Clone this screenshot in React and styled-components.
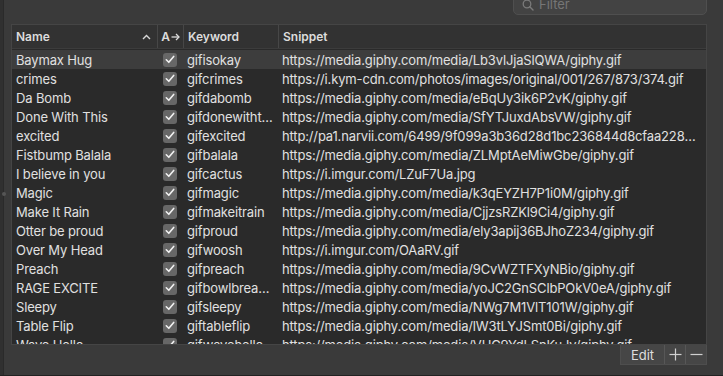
import React from "react";
import styled, { createGlobalStyle } from "styled-components";

const GlobalStyle = createGlobalStyle`
  html, body {
    margin: 0;
    padding: 0;
    background: #3a3a3a;
  }
  * {
    box-sizing: border-box;
  }
`;

const rows = [
  ["Baymax Hug", "gifisokay", "https://media.giphy.com/media/Lb3vlJjaSlQWA/giphy.gif"],
  ["crimes", "gifcrimes", "https://i.kym-cdn.com/photos/images/original/001/267/873/374.gif"],
  ["Da Bomb", "gifdabomb", "https://media.giphy.com/media/eBqUy3ik6P2vK/giphy.gif"],
  ["Done With This", "gifdonewiththis", "https://media.giphy.com/media/SfYTJuxdAbsVW/giphy.gif"],
  ["excited", "gifexcited", "http://pa1.narvii.com/6499/9f099a3b36d28d1bc236844d8cfaa228b13d6f14_hq.gif"],
  ["Fistbump Balala", "gifbalala", "https://media.giphy.com/media/ZLMptAeMiwGbe/giphy.gif"],
  ["I believe in you", "gifcactus", "https://i.imgur.com/LZuF7Ua.jpg"],
  ["Magic", "gifmagic", "https://media.giphy.com/media/k3qEYZH7P1i0M/giphy.gif"],
  ["Make It Rain", "gifmakeitrain", "https://media.giphy.com/media/CjjzsRZKl9Ci4/giphy.gif"],
  ["Otter be proud", "gifproud", "https://media.giphy.com/media/ely3apij36BJhoZ234/giphy.gif"],
  ["Over My Head", "gifwoosh", "https://i.imgur.com/OAaRV.gif"],
  ["Preach", "gifpreach", "https://media.giphy.com/media/9CvWZTFXyNBio/giphy.gif"],
  ["RAGE EXCITE", "gifbowlbreaking", "https://media.giphy.com/media/yoJC2GnSClbPOkV0eA/giphy.gif"],
  ["Sleepy", "gifsleepy", "https://media.giphy.com/media/NWg7M1VlT101W/giphy.gif"],
  ["Table Flip", "giftableflip", "https://media.giphy.com/media/lW3tLYJSmt0Bi/giphy.gif"],
  ["Wave Hello", "gifwavehello", "https://media.giphy.com/media/VUC9YdLSnKuJv/giphy.gif"],
];

const COLS = "145px 26px 95px minmax(0, 1fr)";

export default function App() {
  return (
    <Window>
      <GlobalStyle />
      <SideEdge>
        <Grip />
      </SideEdge>
      <Main>
        <TopBar>
          <FilterField>
            <SearchIcon width="12" height="12" viewBox="0 0 12 12">
              <circle cx="5" cy="5" r="3.8" fill="none" stroke="#7a7a7a" strokeWidth="1.3" />
              <line x1="7.8" y1="7.8" x2="11" y2="11" stroke="#7a7a7a" strokeWidth="1.4" strokeLinecap="round" />
            </SearchIcon>
            <Placeholder>Filter</Placeholder>
          </FilterField>
        </TopBar>
        <Table>
          <HeaderRow>
            <HeaderCell>
              <span>Name</span>
              <SortArrow width="9" height="6" viewBox="0 0 9 6">
                <polyline points="1,5 4.5,1.5 8,5" fill="none" stroke="#d8d8d8" strokeWidth="1.4" />
              </SortArrow>
            </HeaderCell>
            <HeaderCell $divider $narrow>
              <span>A</span>
              <svg width="9" height="8" viewBox="0 0 9 8">
                <line x1="0.5" y1="4" x2="8" y2="4" stroke="#dcdcdc" strokeWidth="1.3" />
                <polyline points="5,1 8,4 5,7" fill="none" stroke="#dcdcdc" strokeWidth="1.3" />
              </svg>
            </HeaderCell>
            <HeaderCell $divider>Keyword</HeaderCell>
            <HeaderCell $divider>Snippet</HeaderCell>
          </HeaderRow>
          <Body>
            {rows.map(([name, keyword, snippet], i) => (
              <Row key={name} $selected={i === 0}>
                <Cell>{name}</Cell>
                <CheckCell>
                  <CheckBox>
                    <svg width="10" height="9" viewBox="0 0 10 9">
                      <polyline points="1.3,4.8 3.8,7.3 8.7,1.4" fill="none" stroke="#f2f2f2" strokeWidth="1.6" strokeLinecap="round" strokeLinejoin="round" />
                    </svg>
                  </CheckBox>
                </CheckCell>
                <Cell>{keyword}</Cell>
                <Cell>{snippet}</Cell>
              </Row>
            ))}
          </Body>
        </Table>
        <Footer>
          <ButtonGroup>
            <FooterButton $wide>Edit</FooterButton>
            <FooterButton>
              <svg width="13" height="13" viewBox="0 0 13 13">
                <line x1="6.5" y1="0.5" x2="6.5" y2="12.5" stroke="#d0d0d0" strokeWidth="1.2" />
                <line x1="0.5" y1="6.5" x2="12.5" y2="6.5" stroke="#d0d0d0" strokeWidth="1.2" />
              </svg>
            </FooterButton>
            <FooterButton>
              <svg width="13" height="13" viewBox="0 0 13 13">
                <line x1="0.5" y1="6.5" x2="12.5" y2="6.5" stroke="#d0d0d0" strokeWidth="1.2" />
              </svg>
            </FooterButton>
          </ButtonGroup>
        </Footer>
      </Main>
    </Window>
  );
}

const Window = styled.div`
  width: 723px;
  height: 376px;
  display: flex;
  flex-direction: row;
  background-color: #3a3a3a;
  border-bottom: 1px solid #222222;
  overflow: hidden;
  font-family: Inter, "Liberation Sans", Arial, sans-serif;
`;

const SideEdge = styled.div`
  width: 4px;
  flex-shrink: 0;
  background-color: #303030;
  border-right: 1px solid #2a2a2a;
  display: flex;
  align-items: center;
  justify-content: flex-end;
`;

const Grip = styled.div`
  width: 4px;
  height: 4px;
  border-radius: 50%;
  background-color: #555555;
  margin-right: -3px;
  margin-top: 12px;
`;

const Main = styled.div`
  flex: 1;
  display: flex;
  flex-direction: column;
  padding: 0 16px 0 7px;
  min-width: 0;
`;

const TopBar = styled.div`
  height: 24px;
  display: flex;
  justify-content: flex-end;
  align-items: flex-start;
`;

const FilterField = styled.div`
  width: 194px;
  height: 22px;
  margin-top: -7px;
  display: flex;
  align-items: center;
  gap: 5px;
  padding: 0 8px;
  background-color: #434343;
  border: 1px solid #4f4f4f;
  border-radius: 5px;
`;

const SearchIcon = styled.svg`
  flex-shrink: 0;
  margin-top: 1px;
`;

const Placeholder = styled.span`
  color: #767676;
  font-size: 13px;
`;

const Table = styled.div`
  height: 321px;
  display: flex;
  flex-direction: column;
  border: 1px solid #454545;
  background-color: #2a2a2a;
  overflow: hidden;
`;

const HeaderRow = styled.div`
  height: 24px;
  flex-shrink: 0;
  display: grid;
  grid-template-columns: ${COLS};
  background-color: #323232;
  border-bottom: 1px solid #3c3c3c;
`;

const HeaderCell = styled.div`
  display: flex;
  align-items: center;
  justify-content: ${(p) => (p.$narrow ? "center" : "space-between")};
  gap: ${(p) => (p.$narrow ? "1px" : "0")};
  padding: ${(p) => (p.$narrow ? "0" : "0 6px 0 4px")};
  color: #dcdcdc;
  font-size: 12px;
  font-weight: 600;
  white-space: nowrap;
  overflow: hidden;
  border-left: ${(p) => (p.$divider ? "1px solid #474747" : "none")};
`;

const SortArrow = styled.svg`
  flex-shrink: 0;
`;

const Body = styled.div`
  display: flex;
  flex-direction: column;
  padding-top: 1px;
`;

const Row = styled.div`
  height: 19px;
  flex-shrink: 0;
  display: grid;
  grid-template-columns: ${COLS};
  align-items: center;
  background-color: ${(p) => (p.$selected ? "#3d3d3d" : "transparent")};
`;

const Cell = styled.div`
  min-width: 0;
  padding: 0 3px 0 4px;
  color: #e0e0e0;
  font-size: 13px;
  letter-spacing: -0.15px;
  white-space: nowrap;
  overflow: hidden;
  text-overflow: ellipsis;
`;

const CheckCell = styled.div`
  display: flex;
  justify-content: center;
  align-items: center;
`;

const CheckBox = styled.div`
  width: 14px;
  height: 14px;
  border-radius: 3px;
  background-color: #676767;
  display: flex;
  align-items: center;
  justify-content: center;
`;

const Footer = styled.div`
  flex: 1;
  display: flex;
  justify-content: flex-end;
  align-items: flex-start;
`;

const ButtonGroup = styled.div`
  display: flex;
  height: 20px;
  background-color: #464646;
  border: 1px solid #4e4e4e;
  border-top: none;
`;

const FooterButton = styled.div`
  width: ${(p) => (p.$wide ? "43px" : "21px")};
  display: flex;
  align-items: center;
  justify-content: center;
  color: #dedede;
  font-size: 13px;
  border-left: 1px solid #575757;
  &:first-child {
    border-left: none;
  }
`;
